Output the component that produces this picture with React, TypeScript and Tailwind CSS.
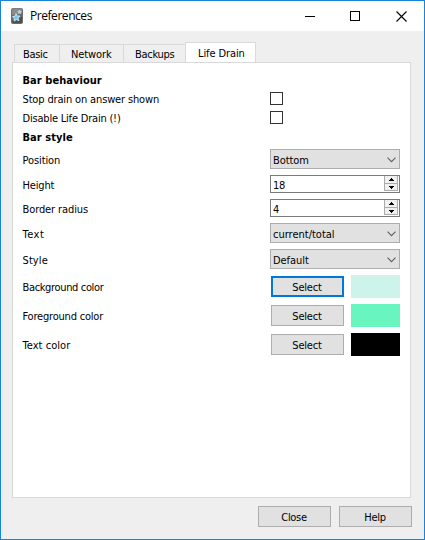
import type { ReactNode } from "react";

function Tab({ label, className }: { label: string; className: string }) {
  return (
    <div className={`border-t border-[#d9d9d9] whitespace-nowrap ${className}`}>
      <span>{label}</span>
    </div>
  );
}

function Row({ label, track, height, children }: { label: string; track: string; height: string; children: ReactNode }) {
  return (
    <div className={`flex items-center ${height}`}>
      <span className={`w-[248px] shrink-0 whitespace-nowrap pl-[0.5px] leading-4 ${track}`}>{label}</span>
      {children}
    </div>
  );
}

function Checkbox() {
  return <div className="size-[13px] border border-[#333333] bg-white" />;
}

function Select({ value, track }: { value: string; track: string }) {
  return (
    <div className="flex h-5 w-[130px] items-center justify-between border border-[#adadad] bg-[#e1e1e1] pl-0.5 pr-[3px]">
      <span className={`pt-[3px] leading-4 ${track}`}>{value}</span>
      <svg width="9" height="6" viewBox="0 0 9 6" fill="none" stroke="#606060" strokeWidth="1.1" className="mt-0.5">
        <path d="M0.5 0.7 4.5 4.7 8.5 0.7" />
      </svg>
    </div>
  );
}

function SpinBox({ value }: { value: string }) {
  return (
    <div className="flex h-[18px] w-[130px] items-center justify-between border border-[#7a7a7a] bg-white pl-0.5 pr-px">
      <span className="pt-[3px] leading-4 tracking-[-0.2px]">{value}</span>
      <div className="flex h-4 w-[14px] flex-col">
        <div className="flex h-[8px] items-center justify-center border-x border-b border-[#acacac] bg-[#f0f0f0]">
          <svg width="5" height="3" viewBox="0 0 5 3" shapeRendering="crispEdges">
            <path d="M2 0h1v1h1v1h1v1H0V2h1V1h1z" />
          </svg>
        </div>
        <div className="flex h-[7px] items-center justify-center border-x border-b border-[#acacac] bg-[#f0f0f0]">
          <svg width="5" height="3" viewBox="0 0 5 3" shapeRendering="crispEdges">
            <path d="M0 0h5v1H4v1H3v1H2V2H1V1H0z" />
          </svg>
        </div>
      </div>
    </div>
  );
}

function Button({ label, track, focused = false }: { label: string; track: string; focused?: boolean }) {
  return (
    <button
      className={`flex h-[21px] w-[73px] items-center justify-center bg-[#e1e1e1] ${
        focused ? "border-2 border-[#0078d7]" : "border border-[#adadad]"
      }`}
    >
      <span className={`pr-px pt-0.5 leading-4 ${track}`}>{label}</span>
    </button>
  );
}

function ColorPicker({ color, focused }: { color: string; focused?: boolean }) {
  return (
    <div className="ml-px flex items-center gap-[7px]">
      <Button label="Select" track="tracking-[-0.2px]" focused={focused} />
      <div className={`h-[23px] w-[49px] ${color}`} />
    </div>
  );
}

function AppIcon() {
  return (
    <svg width="12" height="16" viewBox="0 0 12 16">
      <rect x="0" y="0" width="12" height="16" rx="2" fill="#6c6c6c" />
      <path d="M1 1.5Q1 .5 2 .5h8q1 0 1 1V5L1 7z" fill="#8b8b8b" />
      <path d="M1 12.5 11 9v4.500q0 1.500-1.500 1.500h-7Q1 15 1 13.500z" fill="#4f4f4f" />
      <path d="m5 5.500 1.300 2.400 2.700.1-1.900 2 .9 2.700-2.600-1-2.400 1.400.3-2.700L1.400 8.600l2.700-.5z" fill="#78c8f2" stroke="#e4f6ff" strokeWidth=".7" />
      <path d="m8.500 2 .6 1.200 1.400.1-.9 1 .3 1.400-1.300-.6-1.200.7.200-1.400-1-.9 1.300-.300z" fill="#a9dcf8" stroke="#e4f6ff" strokeWidth=".3" />
    </svg>
  );
}

export default function App() {
  return (
    <div className="flex h-[540px] w-[425px] flex-col border border-[#1883d7] bg-[#efefef] font-['DejaVu_Sans_Condensed','DejaVu_Sans',sans-serif] text-[11px] text-black [font-stretch:condensed]">
      <header className="flex h-[30px] shrink-0 items-center bg-white pl-[10px] pr-[18px]">
        <AppIcon />
        <span className="ml-[7px] font-['Open_Sans',sans-serif] text-[12px] leading-4 tracking-[-0.45px] [font-stretch:normal]">Preferences</span>
        <div className="ml-auto flex items-center gap-[35px]">
          <div className="h-px w-[10px] bg-black" />
          <div className="size-[10px] border border-black" />
          <svg width="11" height="11" viewBox="0 0 11 11" stroke="#000" strokeWidth="1.1" className="-mr-px ml-px">
            <path d="m.5.5 10 10M10.500.5l-10 10" />
          </svg>
        </div>
      </header>

      <main className="flex flex-col px-[11px] pt-[11px]">
        <nav className="ml-0.5 flex h-5 items-end">
          <Tab label="Basic" className="h-[18px] w-[45px] border-l pl-2 leading-[19px] tracking-[-0.3px]" />
          <Tab label="Network" className="h-[18px] w-16 border-l pl-[11px] leading-[19px] tracking-[-0.1px]" />
          <Tab label="Backups" className="h-[18px] w-[62px] border-l pl-[11px] leading-[19px] tracking-[-0.3px]" />
          <Tab label="Life Drain" className="-mb-px h-[21px] w-[71px] border-x bg-white pl-3 leading-[21px] tracking-[-0.1px]" />
        </nav>
        <section className="h-[436px] w-[399px] border border-[#d9d9d9] bg-white pl-[9px] pt-2">
          <h2 className="h-[18px] pl-[0.5px] pt-px text-[11px] font-bold leading-[18px] tracking-[0.05px]">Bar behaviour</h2>
          <Row label="Stop drain on answer shown" track="pt-0.5 tracking-[-0.15px]" height="h-[19px]">
            <Checkbox />
          </Row>
          <Row label="Disable Life Drain (!)" track="pt-0.5 tracking-[-0.2px]" height="h-[19px]">
            <Checkbox />
          </Row>
          <h2 className="h-5 pl-[0.5px] pt-px text-[11px] font-bold leading-5 tracking-[0.05px]">Bar style</h2>
          <div className="mt-0.5 flex flex-col gap-1.5">
            <Row label="Position" track="pt-1 tracking-[-0.1px]" height="h-5">
              <Select value="Bottom" track="tracking-[-0.1px]" />
            </Row>
            <Row label="Height" track="pt-1 tracking-[-0.15px]" height="h-[18px]">
              <SpinBox value="18" />
            </Row>
            <Row label="Border radius" track="pt-1 tracking-[-0.1px]" height="h-[18px]">
              <SpinBox value="4" />
            </Row>
            <Row label="Text" track="pt-1 tracking-[0.5px]" height="h-5">
              <Select value="current/total" track="tracking-[0px]" />
            </Row>
            <Row label="Style" track="pt-1 tracking-[0.1px]" height="h-5">
              <Select value="Default" track="tracking-[-0.05px]" />
            </Row>
            <Row label="Background color" track="pt-0.5 tracking-[-0.35px]" height="h-[23px]">
              <ColorPicker color="bg-[#cdf3ea]" focused />
            </Row>
            <Row label="Foreground color" track="pt-0.5 tracking-[-0.2px]" height="h-[23px]">
              <ColorPicker color="bg-[#69f5c0]" />
            </Row>
            <Row label="Text color" track="pt-0.5 tracking-[0.05px]" height="h-[23px]">
              <ColorPicker color="bg-black" />
            </Row>
          </div>
        </section>
        <footer className="mr-px mt-2 flex justify-end gap-2">
          <Button label="Close" track="tracking-[-0.3px]" />
          <Button label="Help" track="tracking-[-0.3px]" />
        </footer>
      </main>
    </div>
  );
}
